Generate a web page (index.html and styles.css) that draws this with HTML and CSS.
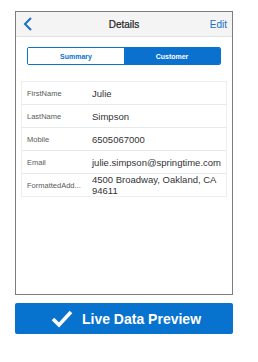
FILE: index.html
```html
<!DOCTYPE html>
<html>
<head>
<meta charset="utf-8">
<link rel="stylesheet" href="styles.css">
</head>
<body>
<div class="page">
  <div class="phone">
    <div class="header">
      <span class="back"><svg width="10" height="14" viewBox="0 0 10 14"><path d="M8 1 L2 7 L8 13" fill="none" stroke="#1a6fc4" stroke-width="2"/></svg></span>
      <span class="title">Details</span>
      <span class="edit">Edit</span>
    </div>
    <div class="content">
      <div class="segment">
        <div class="seg">Summary</div>
        <div class="seg active">Customer</div>
      </div>
      <div class="table">
        <div class="row"><div class="label">FirstName</div><div class="value">Julie</div></div>
        <div class="row"><div class="label">LastName</div><div class="value">Simpson</div></div>
        <div class="row"><div class="label">Mobile</div><div class="value">6505067000</div></div>
        <div class="row"><div class="label">Email</div><div class="value">julie.simpson@springtime.com</div></div>
        <div class="row tall"><div class="label">FormattedAdd...</div><div class="value">4500 Broadway, Oakland, CA 94611</div></div>
      </div>
    </div>
  </div>
  <div class="preview">
    <svg width="22" height="18" viewBox="0 0 22 18"><path d="M2 9 L8 15 L20 2" fill="none" stroke="#fff" stroke-width="3.6"/></svg>
    <span>Live Data Preview</span>
  </div>
</div>
</body>
</html>
```
FILE: styles.css
```css
html, body { margin: 0; padding: 0; background: #fff; }
body { font-family: "Liberation Sans", Arial, sans-serif; }
.page { padding: 11px 0 0 15px; width: 218px; }
.phone {
  width: 216px; height: 282px;
  border: 1px solid #7d7d7d;
  display: flex; flex-direction: column;
}
.header {
  height: 24px; background: #f4f4f4;
  border-bottom: 1px solid #e2e2e2;
  display: flex; align-items: center; justify-content: space-between;
  padding: 0 5px 0 7px;
  position: relative;
}
.back { display: flex; align-items: center; }
.title { font-size: 10px; color: #1e1e1e; position: absolute; left: 0; right: 0; text-align: center; pointer-events: none; -webkit-text-stroke: 0.2px #1e1e1e; }
.edit { font-size: 10px; color: #1a6fc4; }
.content { padding: 10px 5px 0 5px; }
.segment {
  display: flex; margin: 0 6px; height: 16px;
  border: 1px solid #0a71cf; border-radius: 2px; overflow: hidden;
}
.seg { flex: 1; display: flex; align-items: center; justify-content: center; font-size: 7px; color: #0a71cf; font-weight: bold; background: #fff; }
.seg.active { background: #0a71cf; color: #fff; }
.table {
  margin-top: 16px;
  border: 1px solid #eceeef;
}
.row {
  display: flex; align-items: center; min-height: 22px;
  border-bottom: 1px solid #e6e9eb;
  padding-left: 5px;
}
.row:last-child { border-bottom: none; }
.row.tall { height: 22px; }
.label { width: 65px; font-size: 7.5px; color: #5a5a5a; flex: none; }
.value { font-size: 9.5px; color: #333; line-height: 11px; }
.row.tall .value { width: 130px; }
.preview {
  margin-top: 8px; width: 218px; height: 31px;
  background: #0872cf; border-radius: 2px;
  display: flex; align-items: center; justify-content: center; gap: 9px;
  color: #fff; font-weight: bold; font-size: 14px;
  padding-left: 4px; box-sizing: border-box;
}
```
